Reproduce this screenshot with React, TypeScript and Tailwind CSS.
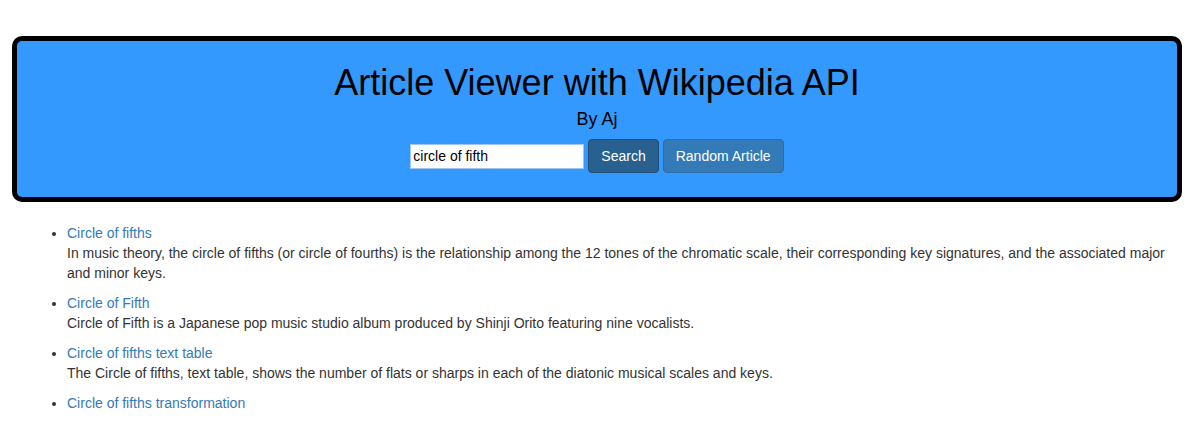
import { useState } from "react"

const results = [
  {
    title: "Circle of fifths",
    snippet:
      "In music theory, the circle of fifths (or circle of fourths) is the relationship among the 12 tones of the chromatic scale, their corresponding key signatures, and the associated major and minor keys.",
  },
  {
    title: "Circle of Fifth",
    snippet: "Circle of Fifth is a Japanese pop music studio album produced by Shinji Orito featuring nine vocalists.",
  },
  {
    title: "Circle of fifths text table",
    snippet:
      "The Circle of fifths, text table, shows the number of flats or sharps in each of the diatonic musical scales and keys.",
  },
  { title: "Circle of fifths transformation", snippet: "" },
]

export default function App() {
  const [query, setQuery] = useState("circle of fifth")

  return (
    <div className="min-h-[443px] bg-white font-['Liberation_Sans',Arial,sans-serif] text-[#333]">
      <div className="ml-[12px] w-[1170px] pt-[36px]">
        <div className="rounded-[10px] border-[5px] border-black bg-[#3399ff] pt-[19px] pb-[24px] text-center">
          <h1 className="text-[36px] leading-[46px] text-black">Article Viewer with Wikipedia API</h1>
          <h3 className="mt-[2px] text-[18px] leading-[22px] text-black">By Aj</h3>
          <div className="mt-[9px] flex items-center justify-center">
            <input
              value={query}
              onChange={(e) => setQuery(e.target.value)}
              className="h-[25px] w-[174px] border border-[#9fc6ee] bg-white px-[2px] text-[14px] text-black outline-none"
            />
            <button className="ml-[4px] h-[34px] rounded-[4px] border border-[#204d74] bg-[#286090] px-[12px] text-[14px] text-white">
              Search
            </button>
            <button className="ml-[4px] h-[34px] rounded-[4px] border border-[#2e6da4] bg-[#337ab7] px-[12px] text-[14px] text-white">
              Random Article
            </button>
          </div>
        </div>

        <ul className="mt-[21px] list-disc pl-[55px] text-[14px] leading-[20px]">
          {results.map((r) => (
            <li key={r.title} className="mb-[10px]">
              <a href="#" className="text-[#337ab7]">
                {r.title}
              </a>
              {r.snippet && <p className="pr-[2px]">{r.snippet}</p>}
            </li>
          ))}
        </ul>
      </div>
    </div>
  )
}
